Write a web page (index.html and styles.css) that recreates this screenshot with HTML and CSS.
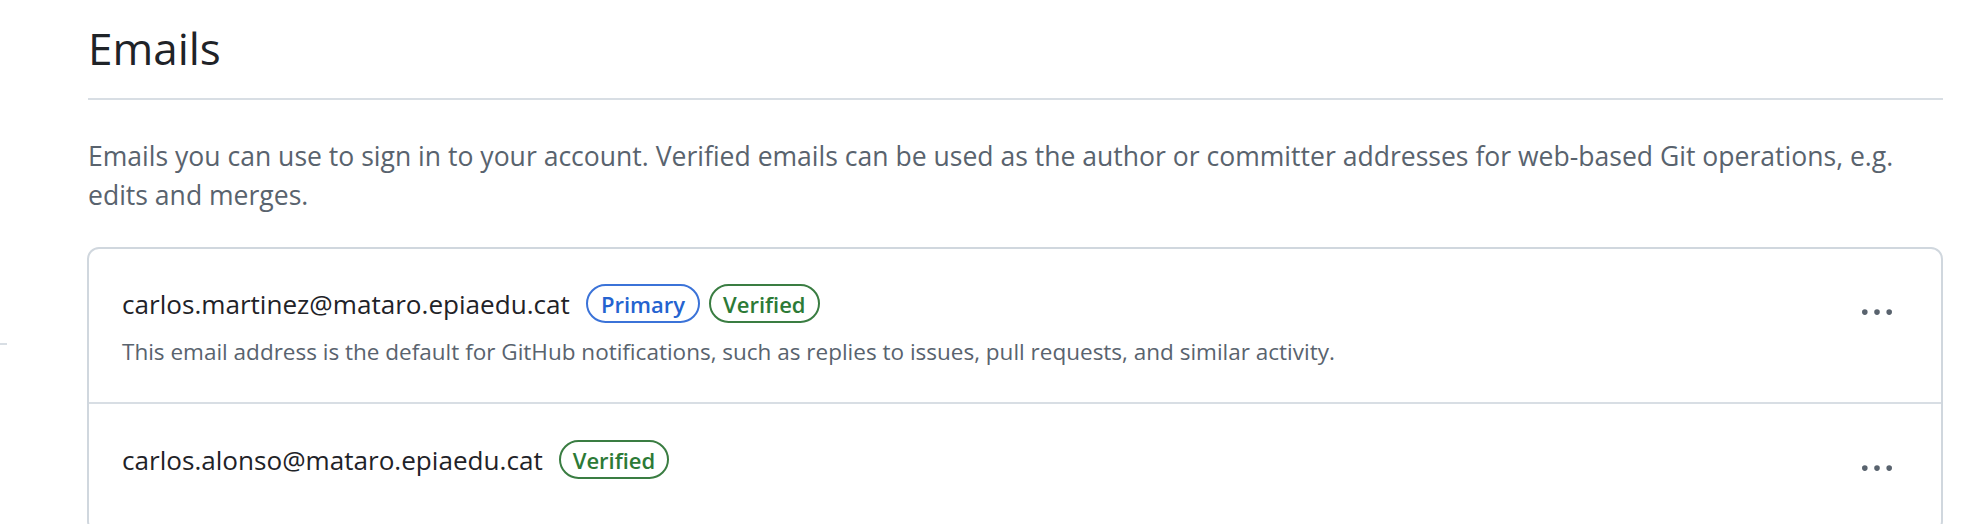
FILE: index.html
```html
<!DOCTYPE html>
<html lang="en">
<head>
<meta charset="utf-8">
<title>Emails</title>
<link rel="stylesheet" href="styles.css">
</head>
<body>
<div class="page">
  <div class="side"><div class="side-rule"></div></div>
  <main class="main">
    <div class="subhead">
      <h2 class="subhead-heading">Emails</h2>
    </div>
    <p class="desc">Emails you can use to sign in to your account. Verified emails can be used as the author or committer addresses for web-based Git operations, e.g. edits and merges.</p>
    <div class="box">
      <div class="box-row">
        <div class="row-main">
          <div class="email-line">
            <span class="email">carlos.martinez@mataro.epiaedu.cat</span>
            <span class="label label-blue">Primary</span>
            <span class="label label-green">Verified</span>
          </div>
          <p class="note">This email address is the default for GitHub notifications, such as replies to issues, pull requests, and similar activity.</p>
        </div>
        <button class="kebab" aria-label="More options">
          <svg viewBox="0 0 16 16" width="30" height="30"><path fill="currentColor" d="M8 9a1.5 1.5 0 1 0 0-3 1.5 1.5 0 0 0 0 3ZM1.5 9a1.5 1.5 0 1 0 0-3 1.5 1.5 0 0 0 0 3Zm13 0a1.5 1.5 0 1 0 0-3 1.5 1.5 0 0 0 0 3Z"/></svg>
        </button>
      </div>
      <div class="box-row">
        <div class="row-main">
          <div class="email-line">
            <span class="email">carlos.alonso@mataro.epiaedu.cat</span>
            <span class="label label-green">Verified</span>
          </div>
        </div>
        <button class="kebab" aria-label="More options">
          <svg viewBox="0 0 16 16" width="30" height="30"><path fill="currentColor" d="M8 9a1.5 1.5 0 1 0 0-3 1.5 1.5 0 0 0 0 3ZM1.5 9a1.5 1.5 0 1 0 0-3 1.5 1.5 0 0 0 0 3Zm13 0a1.5 1.5 0 1 0 0-3 1.5 1.5 0 0 0 0 3Z"/></svg>
        </button>
      </div>
    </div>
  </main>
</div>
</body>
</html>
```
FILE: styles.css
```css
html, body {
  margin: 0;
  padding: 0;
  background: #ffffff;
}
body {
  font-family: "Open Sans", "Noto Sans", "Liberation Sans", sans-serif;
  color: #1f2328;
  overflow: hidden;
  height: 524px;
}
.page {
  display: flex;
  align-items: flex-start;
}
.side {
  width: 87px;
  flex: 0 0 87px;
}
.side-rule {
  margin-top: 343px;
  width: 7px;
  height: 2px;
  background: #d8dee4;
}
.main {
  width: 1856px;
  flex: 0 0 1856px;
}
.subhead {
  padding-top: 20px;
  padding-bottom: 22px;
  border-bottom: 2px solid #d8dee4;
  margin-left: 1px;
}
.subhead-heading {
  margin: 0;
  font-size: 44px;
  font-weight: 400;
  line-height: 56px;
}
.desc {
  margin: 37px 0 32px 1px;
  font-size: 26.55px;
  line-height: 39px;
  color: #59636e;
}
.box {
  border: 2px solid #d0d7de;
  border-radius: 12px;
  overflow: hidden;
}
.box-row {
  display: flex;
  align-items: flex-start;
  padding: 35px 33px 33px 33px;
}
.box-row + .box-row {
  border-top: 2px solid #d8dee4;
  padding-top: 36px;
}
.row-main {
  flex: 1 1 auto;
  min-width: 0;
}
.email-line {
  display: flex;
  align-items: center;
  height: 39px;
}
.email {
  font-size: 26.1px;
  color: #1f2328;
  margin-right: 16px;
}
.label {
  display: inline-flex;
  align-items: center;
  box-sizing: border-box;
  height: 39px;
  padding: 0 12px;
  border: 2px solid;
  border-radius: 20px;
  font-size: 22px;
  font-weight: 600;
  margin-right: 9px;
}
.label-blue {
  color: #2563d0;
  border-color: #3b73d8;
  padding: 0 13px;
}
.label-green {
  color: #2c7a36;
  border-color: #3a7d42;
}
.note {
  margin: 12px 0 0 0;
  font-size: 22.5px;
  line-height: 34px;
  color: #59636e;
}
.kebab {
  flex: 0 0 auto;
  width: 62px;
  height: 58px;
  margin: 0;
  padding: 0;
  border: 0;
  background: transparent;
  color: #59636e;
  display: flex;
  align-items: center;
  justify-content: center;
}
.kebab svg {
  display: block;
}
```
